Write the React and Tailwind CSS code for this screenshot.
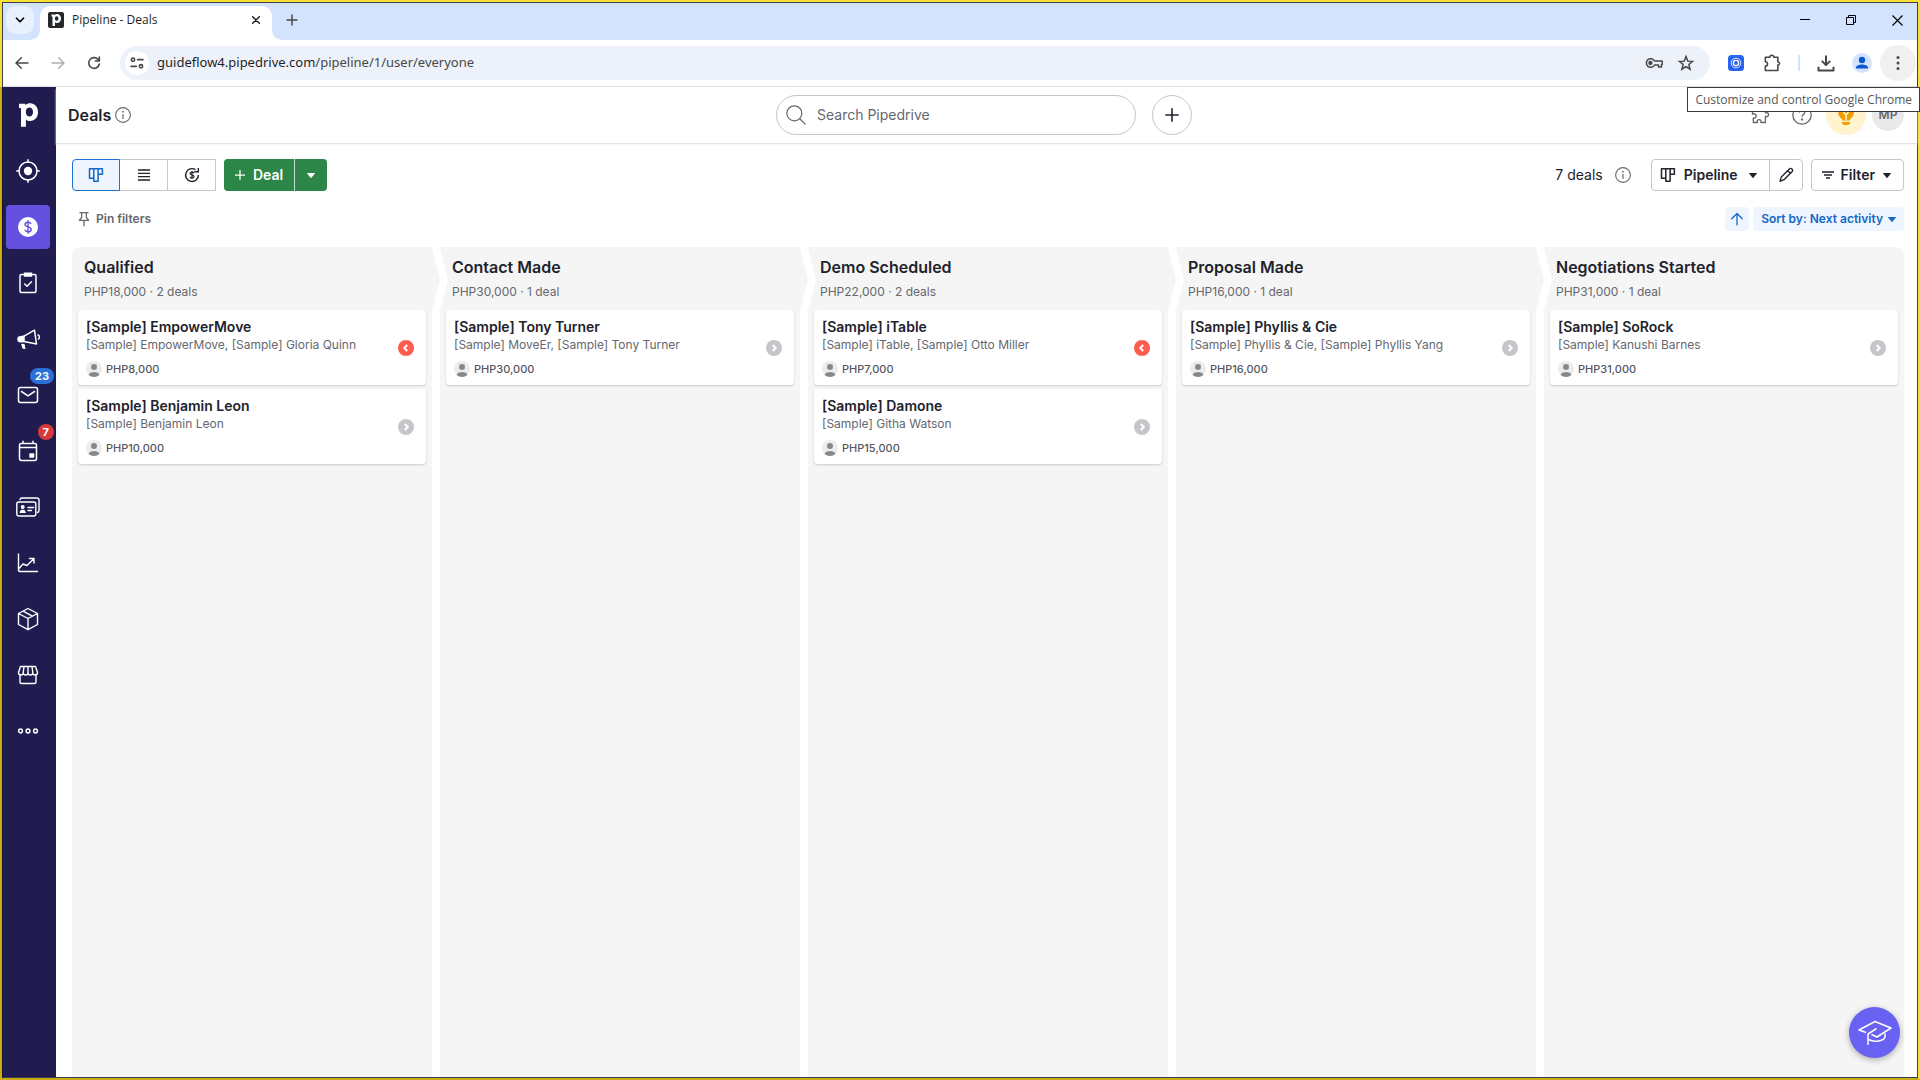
import clsx from 'clsx';

const STAGES = [
  {
    name: 'Qualified',
    total: 'PHP18,000',
    count: '2 deals',
    deals: [
      {
        title: '[Sample] EmpowerMove',
        contact: '[Sample] EmpowerMove, [Sample] Gloria Quinn',
        value: 'PHP8,000',
        overdue: true,
      },
      { title: '[Sample] Benjamin Leon', contact: '[Sample] Benjamin Leon', value: 'PHP10,000' },
    ],
  },
  {
    name: 'Contact Made',
    total: 'PHP30,000',
    count: '1 deal',
    deals: [
      { title: '[Sample] Tony Turner', contact: '[Sample] MoveEr, [Sample] Tony Turner', value: 'PHP30,000' },
    ],
  },
  {
    name: 'Demo Scheduled',
    total: 'PHP22,000',
    count: '2 deals',
    deals: [
      {
        title: '[Sample] iTable',
        contact: '[Sample] iTable, [Sample] Otto Miller',
        value: 'PHP7,000',
        overdue: true,
      },
      { title: '[Sample] Damone', contact: '[Sample] Githa Watson', value: 'PHP15,000' },
    ],
  },
  {
    name: 'Proposal Made',
    total: 'PHP16,000',
    count: '1 deal',
    deals: [
      { title: '[Sample] Phyllis & Cie', contact: '[Sample] Phyllis & Cie, [Sample] Phyllis Yang', value: 'PHP16,000' },
    ],
  },
  {
    name: 'Negotiations Started',
    total: 'PHP31,000',
    count: '1 deal',
    deals: [{ title: '[Sample] SoRock', contact: '[Sample] Kanushi Barnes', value: 'PHP31,000' }],
  },
];

// Stroke icon base
const Icon = ({ size = 24, width = 1.5, className, children }) => (
  <svg
    width={size}
    height={size}
    viewBox="0 0 24 24"
    fill="none"
    stroke="currentColor"
    strokeWidth={width}
    strokeLinecap="round"
    strokeLinejoin="round"
    className={clsx('shrink-0', className)}
    aria-hidden="true"
  >
    {children}
  </svg>
);

const PipedriveMark = ({ size }) => (
  <svg width={size} height={size} viewBox="0 0 24 24" className="shrink-0" aria-hidden="true">
    <path
      fill="currentColor"
      fillRule="evenodd"
      d="M3 .8h5.6c.5 0 .8.5.9 1.2C10.600.8 12.200.2 14.100.2c4.700 0 7.900 3.700 7.900 8.900 0 5.300-3.300 9-7.900 9-1.800 0-3.200-.6-4.200-1.600V23.800H5V5.800c0-.5-.2-.7-.700-.7H3V.8Zm10.400 3.800c-1.900 0-3.600 1.400-3.600 4.500 0 2.700 1.500 4.500 3.600 4.500 1.900 0 3.600-1.400 3.600-4.500 0-2.900-1.600-4.500-3.600-4.500Z"
    />
  </svg>
);

const Caret = ({ className }) => (
  <svg width="8" height="5" viewBox="0 0 8 5" fill="currentColor" className={clsx('shrink-0', className)} aria-hidden="true">
    <path d="M.3 0h7.4c.3 0 .4.300.2.500L4.400 4.700a.5.5 0 0 1-.8 0L.1.500C-.1.300 0 0 .3 0Z" />
  </svg>
);

const InfoIcon = ({ className }) => (
  <svg width="16" height="16" viewBox="0 0 16 16" fill="none" className={clsx('shrink-0', className)} aria-hidden="true">
    <circle cx="8" cy="8" r="7.400" stroke="currentColor" strokeWidth="1.100" />
    <path d="M8 7v5" stroke="currentColor" strokeWidth="1.200" />
    <circle cx="8" cy="4.700" r=".9" fill="currentColor" />
  </svg>
);

const BoardIcon = () => (
  <svg width="16" height="16" viewBox="0 0 16 16" fill="none" stroke="currentColor" strokeWidth="1.500" strokeLinejoin="round" aria-hidden="true">
    <path d="M1.500 1.700h4.300v9.600H1.500zM5.800 1.700h4.300v12.600H5.800zM10.100 1.700h4.300v5.600h-4.300z" />
  </svg>
);

const NAV_ITEMS = [
  {
    label: 'Leads',
    icon: (
      <Icon>
        <circle cx="12" cy="12" r="9" />
        <circle cx="12" cy="12" r="4.200" fill="currentColor" stroke="none" />
        <path d="M12 .8V3M12 21v2.200M.8 12H3M21 12h2.200" />
      </Icon>
    ),
  },
  {
    label: 'Deals',
    active: true,
    icon: (
      <svg width="20" height="20" viewBox="0 0 20 20" aria-hidden="true">
        <circle cx="10" cy="10" r="10" fill="white" />
        <path
          d="M13 6.900C12.500 5.700 11.400 5.200 10 5.200c-1.700 0-3 .8-3 2.200 0 3.300 6.200 1.600 6.200 5 0 1.500-1.300 2.400-3.200 2.400-1.600 0-2.800-.7-3.300-2M10 3.300v13.400"
          fill="none"
          stroke="#6450df"
          strokeWidth="1.400"
        />
      </svg>
    ),
  },
  {
    label: 'Projects',
    icon: (
      <Icon>
        <rect x="4" y="3.500" width="16" height="18" rx="1.500" />
        <path d="M8.500 2.200h7V5h-7z" fill="currentColor" />
        <path d="m8.700 13 2.300 2.300 4.500-4.500" />
      </Icon>
    ),
  },
  {
    label: 'Campaigns',
    icon: (
      <Icon>
        <path d="M4.500 9.800 8 9.200v5.300l-3.500.3a2.500 2.500 0 0 1 0-5Z" fill="currentColor" />
        <path d="m8 9.200 10.500-6L20.500 17 8 14.500" />
        <path d="M22 8a2.300 2.300 0 0 1 .5 4" />
        <path d="M6 17.500 7.200 21l1.500.3-.7-3.500Z" fill="currentColor" />
      </Icon>
    ),
  },
  {
    label: 'Mail',
    badge: '23',
    badgeColor: 'bg-[#2970d8]',
    icon: (
      <Icon>
        <rect x="2.500" y="4.500" width="19" height="15" rx="2" />
        <path d="m5.500 8.500 6.500 4.300 6.500-4.300" />
      </Icon>
    ),
  },
  {
    label: 'Activities',
    badge: '7',
    badgeColor: 'bg-[#d83a3a]',
    icon: (
      <Icon>
        <path d="M3.500 8.500V6A1.500 1.500 0 0 1 5 4.500h14A1.500 1.500 0 0 1 20.500 6v13.500a2 2 0 0 1-2 2h-13a2 2 0 0 1-2-2Zm0 0h17M7 2.300v2M17 2.300v2" />
        <path d="M14 15h3.500v3H14z" fill="currentColor" />
      </Icon>
    ),
  },
  {
    label: 'Contacts',
    icon: (
      <Icon width={1.4}>
        <rect x=".8" y="7" width="19" height="14" rx="2" />
        <path d="M4 4.500A2 2 0 0 1 6 3h15a2 2 0 0 1 2 2v10.500a2 2 0 0 1-1.500 2" />
        <circle cx="6.700" cy="12" r="1.300" fill="currentColor" />
        <path d="M4.300 17.300c.3-1.500 1.200-2 2.400-2s2.100.5 2.400 2ZM12 12.500h5.500M12 15.500h3.500" fill="currentColor" />
      </Icon>
    ),
  },
  {
    label: 'Insights',
    icon: (
      <Icon width={1.4}>
        <path d="M2.500 3v16a1.500 1.500 0 0 0 1.500 1.500h17.500" />
        <path d="m3 17.500 4-4.500 4 1.500 6.500-6.500M13.500 7.500H18V12" />
      </Icon>
    ),
  },
  {
    label: 'Products',
    icon: (
      <Icon width={1.4}>
        <path d="m12 1.500 9.500 5v11L12 22.700l-9.500-5.200v-11ZM2.500 6.500l9.500 5 9.500-5M12 11.500v11M7 4.200l9.500 5" />
      </Icon>
    ),
  },
  {
    label: 'Marketplace',
    icon: (
      <Icon width={1.4}>
        <path d="M4.500 3.500h15l2 6c0 1.500-1 2.500-2.400 2.500s-2.300-1-2.300-2.300c0 1.300-1 2.300-2.400 2.300S12 11 12 9.700c0 1.300-1 2.300-2.400 2.300s-2.400-1-2.400-2.300c0 1.300-.9 2.300-2.300 2.300S2.500 11 2.500 9.500ZM8 3.500l-.8 6.200M12 3.500v6.200M16 3.500l.8 6.200M4 12v7a1.500 1.500 0 0 0 1.500 1.500h13A1.500 1.500 0 0 0 20 19v-7" />
      </Icon>
    ),
  },
  {
    label: 'More',
    icon: (
      <Icon>
        <circle cx="4.500" cy="12" r="1.900" />
        <circle cx="12" cy="12" r="1.900" />
        <circle cx="19.500" cy="12" r="1.900" />
      </Icon>
    ),
  },
];

const ToolbarButton = ({ label, className, children }) => (
  <button aria-label={label} className={clsx('flex size-9 shrink-0 items-center justify-center rounded-full', className)}>
    {children}
  </button>
);

const TabStrip = () => (
  <div className="flex h-[37px] items-start bg-[#d3e3fd] pt-[3px] pl-[3px]">
    <button aria-label="Search tabs" className="flex size-7 items-center justify-center rounded-[10px] bg-[#e9f0fd]">
      <Icon size={14} width={3}><path d="m6 9 6 6 6-6" /></Icon>
    </button>
    <div className="relative ml-1.5 flex h-[34px] w-[232px] items-center rounded-t-[10px] bg-white pb-1.5 pl-2 text-[#1f1f1f]">
      <span className="flex size-4 items-center justify-center rounded-[2px] bg-[#26292c] text-white">
        <PipedriveMark size={12} />
      </span>
      <span className="ml-2 flex-1 text-xs">Pipeline - Deals</span>
      <button aria-label="Close tab" className="mr-2 flex size-4 items-center justify-center">
        <Icon size={16} width={2.2}><path d="m7 7 10 10M17 7 7 17" /></Icon>
      </button>
      {/* flared bottom corners of the active tab */}
      <svg className="absolute -left-2.5 bottom-0" width="10" height="10" fill="white" aria-hidden="true">
        <path d="M10 0v10H0A10 10 0 0 0 10 0Z" />
      </svg>
      <svg className="absolute -right-2.5 bottom-0" width="10" height="10" fill="white" aria-hidden="true">
        <path d="M0 0v10h10A10 10 0 0 1 0 0Z" />
      </svg>
    </div>
    <button aria-label="New tab" className="ml-1.5 flex size-7 items-center justify-center text-[#474747]">
      <Icon size={16} width={2.2}><path d="M12 4.500v15M4.500 12h15" /></Icon>
    </button>
    <div className="-mr-[3px] ml-auto flex text-black">
      <button aria-label="Minimize" className="flex h-7 w-[46px] items-center justify-center">
        <svg width="10" height="10" fill="currentColor"><path d="M0 4h10v1H0z" /></svg>
      </button>
      <button aria-label="Restore" className="flex h-7 w-[46px] items-center justify-center">
        <svg width="10" height="10" fill="none" stroke="currentColor"><path d="M.5 2.500h7v7h-7zM2.500 2.500v-2h7v7h-2" /></svg>
      </button>
      <button aria-label="Close" className="flex h-7 w-[46px] items-center justify-center">
        <svg width="11" height="11" fill="none" stroke="currentColor" strokeWidth="1.200"><path d="m.5.500 10 10M10.500.500l-10 10" /></svg>
      </button>
    </div>
  </div>
);

const AddressBar = () => (
  <div className="flex h-[47px] items-center border-b border-[#dedfe1] bg-white px-px text-[#474747]">
    <ToolbarButton label="Back">
      <Icon size={16} width={2.2}><path d="M21 12H4M11 4l-8 8 8 8" /></Icon>
    </ToolbarButton>
    <ToolbarButton label="Forward" className="text-[#b0b0b0]">
      <Icon size={16} width={2.2}><path d="M3 12h17M13 4l8 8-8 8" /></Icon>
    </ToolbarButton>
    <ToolbarButton label="Reload">
      <Icon size={16} width={2.4}><path d="M20 13.500A8 8 0 1 1 18 6.500l2 2M20 3v6h-6" /></Icon>
    </ToolbarButton>
    <div className="mx-2 flex h-[34px] min-w-0 flex-1 items-center rounded-full bg-[#edf2fa] pr-4 pl-[5px]">
      <button aria-label="View site information" className="flex size-6 items-center justify-center rounded-full bg-white">
        <Icon size={16} width={2.4}>
          <circle cx="6" cy="7" r="2.500" />
          <path d="M13 7h8M3 17h8" />
          <circle cx="18" cy="17" r="2.500" />
        </Icon>
      </button>
      <span className="ml-2 min-w-0 flex-1 font-['Noto_Sans','Liberation_Sans',sans-serif] text-[13px] whitespace-nowrap">
        <span className="text-[#1f1f1f]">guideflow4.pipedrive.com</span>/pipeline/1/user/everyone
      </span>
      <button aria-label="Manage passwords" className="flex size-4 items-center justify-center">
        <svg width="18" height="12" viewBox="0 0 18 12" fill="none" stroke="currentColor" strokeWidth="1.500" className="shrink-0" aria-hidden="true">
          <path d="M9.500 4A4.300 4.300 0 1 0 9.500 8h4v2h3V7.500h.7V4Z" strokeLinejoin="round" />
          <circle cx="5.400" cy="6" r="1.400" fill="currentColor" />
        </svg>
      </button>
      <button aria-label="Bookmark this tab" className="ml-4 flex size-4 items-center justify-center">
        <Icon size={18} width={2}>
          <path d="m12 3.500 2.400 6 6.400.4-5 4.100 1.700 6.300-5.500-3.500-5.500 3.500 1.700-6.300-5-4.100 6.400-.4Z" strokeLinejoin="miter" />
        </Icon>
      </button>
    </div>
    <ToolbarButton label="Extension">
      <svg width="16" height="16" viewBox="0 0 16 16" fill="none" aria-hidden="true">
        <rect width="16" height="16" rx="3.500" fill="#2a62f0" />
        <circle cx="8" cy="8" r="4.800" stroke="white" strokeWidth=".8" />
        <circle cx="8" cy="8" r="2.600" stroke="white" strokeWidth="1.300" />
      </svg>
    </ToolbarButton>
    <ToolbarButton label="Extensions">
      <Icon size={20} width={1.9}>
        <path d="M4 5h5.500a2.300 2.300 0 0 1 4.600 0H19v5.500a2 2 0 0 1 0 4V21H4v-5.300a2.600 2.600 0 0 0 0-5.200Z" />
      </Icon>
    </ToolbarButton>
    <span className="mx-2 h-4 w-0.5 bg-[#d3e3fd]" />
    <ToolbarButton label="Downloads">
      <Icon size={20} width={2.4}><path d="M12 3v11M7 9.500l5 5 5-5M3 16.500V21h18v-4.500" strokeLinecap="butt" /></Icon>
    </ToolbarButton>
    <ToolbarButton label="Profile">
      <svg width="20" height="20" viewBox="0 0 20 20" aria-hidden="true">
        <circle cx="10" cy="10" r="10" fill="#d3e3fd" />
        <circle cx="10" cy="7" r="3.200" fill="#0b57d0" />
        <path d="M4 15.500v-1c0-2 3.500-3 6-3s6 1 6 3v1Z" fill="#0b57d0" />
      </svg>
    </ToolbarButton>
    <ToolbarButton label="Customize and control" className="bg-[#f0f0f0]">
      <svg width="4" height="16" viewBox="0 0 4 16" fill="currentColor" aria-hidden="true">
        <circle cx="2" cy="2.500" r="1.500" />
        <circle cx="2" cy="8" r="1.500" />
        <circle cx="2" cy="13.500" r="1.500" />
      </svg>
    </ToolbarButton>
  </div>
);

const Sidebar = () => (
  <nav className="flex w-[53px] shrink-0 flex-col gap-3 bg-[#211c4f] pt-1.5 pl-[3px] text-white">
    <a href="#home" aria-label="Pipedrive" className="flex size-11 items-center justify-center">
      <PipedriveMark size={24} />
    </a>
    {NAV_ITEMS.map((item) => (
      <a
        key={item.label}
        href={`#${item.label.toLowerCase()}`}
        aria-label={item.label}
        className={clsx('relative flex size-11 items-center justify-center rounded-sm', item.active && 'bg-[#6450df]')}
      >
        {item.icon}
        {item.badge && (
          <span
            className={clsx(
              'absolute -top-[5px] -right-1 flex h-4 items-center rounded-full px-[5px] text-[11px] font-bold',
              item.badgeColor
            )}
          >
            {item.badge}
          </span>
        )}
      </a>
    ))}
  </nav>
);

const AppHeader = () => (
  <header className="grid h-14 shrink-0 grid-cols-[1fr_auto_1fr] items-center pr-[13px] pl-2 text-[#65686f] shadow-[0_1px_0_#e3e4e6,0_2px_2px_#f3f3f3]">
    <div className="flex items-center gap-1 pl-1">
      <h1 className="text-base font-semibold text-[#21232c]">Deals</h1>
      <InfoIcon />
    </div>
    <div className="flex items-center gap-4">
      <label className="flex h-10 w-[360px] items-center gap-[11px] rounded-full border border-[#c5c6c9] pl-[9px]">
        <Icon size={20} width={1.5}>
          <circle cx="10" cy="10" r="9" />
          <path d="m16.500 16.500 6.500 6.500" />
        </Icon>
        <input
          type="text"
          aria-label="Search Pipedrive"
          placeholder="Search Pipedrive"
          className="min-w-0 flex-1 text-sm outline-none placeholder:text-[#65686f]"
        />
      </label>
      <button aria-label="Quick add" className="flex size-10 items-center justify-center rounded-full border border-[#c5c6c9] text-[#21232c]">
        <Icon size={16} width={2.4}><path d="M12 2v20M2 12h20" strokeLinecap="butt" /></Icon>
      </button>
    </div>
    <div className="flex items-center justify-end gap-1.5">
      <button aria-label="Integrations" className="flex size-9 items-center justify-center">
        <Icon size={20} width={1.6}>
          <path d="M3 4h5.500a2.300 2.300 0 0 1 4.600 0H18.500v5.500c2-1 3.800 0 3.800 2s-1.800 3-3.800 2V21h-5.500c1-2-.3-3.500-2-3.500s-3 1.500-2 3.500H4v-5.500c2 .8 3.500-.3 3.500-2.200S5 9.500 3 11Z" />
        </Icon>
      </button>
      <button aria-label="Help" className="flex size-9 items-center justify-center">
        <svg width="20" height="20" viewBox="0 0 20 20" fill="none" stroke="currentColor" strokeWidth="1.300" aria-hidden="true">
          <circle cx="10" cy="10" r="9.200" />
          <path d="M7.300 7.500C7.400 5.900 8.500 5 10 5c1.600 0 2.700 1 2.700 2.400 0 2-2.700 2.300-2.700 4.400" />
          <circle cx="10" cy="14.500" r=".5" fill="currentColor" />
        </svg>
      </button>
      <button aria-label="Tips" className="flex size-10 items-center justify-center rounded-full bg-[#fff4ce]">
        <svg width="16" height="20" viewBox="0 0 16 20" aria-hidden="true">
          <path d="M8 0a7.500 7.500 0 0 0-4 13.900V15.500h8V13.900A7.500 7.500 0 0 0 8 0ZM4 17h8v1.200L10.500 20h-5L4 18.200Z" fill="#f29d00" />
          <path d="m5.500 7 2.500 3 2.500-3M8 10v5" stroke="#fff4ce" strokeWidth="1.500" fill="none" />
        </svg>
      </button>
      <button className="flex size-8 items-center justify-center rounded-full bg-[#e9e9ea] text-xs font-semibold">MP</button>
    </div>
  </header>
);

const BoardToolbar = () => (
  <div className="flex items-center text-sm text-[#21232c]">
    <div className="flex h-8">
      <button aria-label="Pipeline view" className="flex w-12 items-center justify-center rounded-l-sm border border-[#1f70d2] bg-[#eff5fe] text-[#1267c7]">
        <BoardIcon />
      </button>
      <button aria-label="List view" className="flex w-12 items-center justify-center border-y border-r border-[#c5c6c9]">
        <svg width="12" height="12" fill="none" stroke="currentColor" strokeWidth="1.300" aria-hidden="true">
          <path d="M0 1h12M0 4.300h12M0 7.700h12M0 11h12" />
        </svg>
      </button>
      <button aria-label="Forecast view" className="flex w-12 items-center justify-center border-y border-r border-[#c5c6c9]">
        <svg width="16" height="16" viewBox="0 0 16 16" fill="none" stroke="currentColor" strokeWidth="1.400" aria-hidden="true">
          <path d="M11.500 2.700A6.400 6.400 0 1 0 14.400 8M10.300 4.700h4V1" />
          <path d="M10 6.200C9.700 5.400 9 5.100 8 5.100c-1.100 0-2 .5-2 1.400 0 2 4 1 4 3 0 1-.9 1.500-2 1.500S6.200 10.600 6 9.800M8 4v8" strokeWidth="1.200" />
        </svg>
      </button>
    </div>
    <div className="ml-2 flex h-8 gap-px overflow-hidden rounded-sm bg-[#c3dfcb] text-white">
      <button className="flex items-center gap-2 bg-[#2b8647] px-[11px] font-semibold">
        <Icon size={10} width={3}><path d="M12 0v24M0 12h24" strokeLinecap="butt" /></Icon>
        Deal
      </button>
      <button aria-label="More deal options" className="flex w-8 items-center justify-center bg-[#2b8647]">
        <Caret />
      </button>
    </div>
    <span className="ml-auto">7 deals</span>
    <InfoIcon className="ml-3 text-[#65686f]" />
    <div className="ml-5 flex h-8 rounded-sm border border-[#c5c6c9]">
      <button className="flex items-center border-r border-[#c5c6c9] px-2 font-semibold">
        <BoardIcon />
        <span className="ml-2">Pipeline</span>
        <Caret className="mr-1 ml-[11px]" />
      </button>
      <button aria-label="Edit pipeline" className="flex w-8 items-center justify-center">
        <Icon size={16} width={2}><path d="M3 21.500 5 15 17 3a2.800 2.800 0 0 1 4 4L9 19l-6 2.500ZM14.500 5.500l4 4" /></Icon>
      </button>
    </div>
    <button className="ml-2 flex h-8 items-center rounded-sm border border-[#c5c6c9] pr-3 pl-2.5 font-semibold">
      <svg width="12" height="8" fill="none" stroke="currentColor" strokeWidth="1.500" aria-hidden="true">
        <path d="M0 1h12M2 4h8M4 7h4" />
      </svg>
      <span className="ml-[7px]">Filter</span>
      <Caret className="ml-2" />
    </button>
  </div>
);

const FilterRow = () => (
  <div className="mt-4 flex h-6 items-center gap-1 text-xs font-semibold">
    <button className="mr-auto flex items-center gap-1 pl-1 text-[#65686f]">
      <Icon size={16} width={2}>
        <path d="M6 2.500h12M8.500 2.500v7L5 14h14l-3.500-4.500v-7M12 14v8" />
      </Icon>
      Pin filters
    </button>
    <button aria-label="Sort ascending" className="flex size-6 items-center justify-center rounded-sm bg-[#eff5fe] text-[#1267c7]">
      <Icon size={14} width={2.2}><path d="M12 22V3M3 11.500 12 2.500l9 9" /></Icon>
    </button>
    <button className="flex h-6 items-center gap-[5px] rounded-sm bg-[#eff5fe] px-2 text-[#1267c7]">
      Sort by: Next activity
      <Caret />
    </button>
  </div>
);

const DealCard = ({ deal }) => (
  <article className="flex h-[75px] items-center rounded-sm bg-white pr-3 pl-2 shadow-[0_1px_2px_rgba(33,35,44,0.2)]">
    <div className="min-w-0 flex-1 self-start pt-[7px]">
      <h3 className="text-sm leading-5 font-semibold text-[#21232c]">{deal.title}</h3>
      <p className="truncate text-xs leading-4 text-[#65686f]">{deal.contact}</p>
      <div className="mt-2 flex items-center gap-1 text-[11px] leading-4 font-medium text-[#55585f]">
        <svg width="16" height="16" viewBox="0 0 16 16" aria-hidden="true">
          <circle cx="8" cy="8" r="8" fill="#ececed" />
          <circle cx="8" cy="6" r="3" fill="#86888d" />
          <path d="M2.600 13.900C3.300 11.800 5.500 11 8 11s4.700.8 5.400 2.900A8 8 0 0 1 8 16a8 8 0 0 1-5.400-2.100Z" fill="#86888d" />
        </svg>
        {deal.value}
      </div>
    </div>
    <button
      aria-label={deal.overdue ? 'Overdue activity' : 'Next activity'}
      className={clsx('flex size-4 items-center justify-center rounded-full text-white', deal.overdue ? 'bg-[#ff5c4d]' : 'bg-[#c5c6c9]')}
    >
      <Icon size={12} width={4}>
        <path d={deal.overdue ? 'm14.500 6-6 6 6 6' : 'm9.500 6 6 6-6 6'} strokeLinecap="butt" strokeLinejoin="miter" />
      </Icon>
    </button>
  </article>
);

const StageColumn = ({ stage, isLast }) => (
  <section className="min-w-0 flex-1 bg-[#f5f5f5] px-1.5 first:rounded-tl-lg last:rounded-tr-lg">
    <div className="relative -mx-1.5 h-[63px] px-3 pt-2">
      <h2 className="text-base leading-6 font-semibold text-[#21232c]">{stage.name}</h2>
      <p className="mt-[5px] text-xs leading-4 text-[#65686f]">
        {stage.total} · {stage.count}
      </p>
      {/* arrow pointing to the next stage */}
      {!isLast && (
        <svg className="absolute top-0 -right-4 z-10" width="16" height="63" aria-hidden="true">
          <path d="M0 0 8 33 0 63Z" fill="#f5f5f5" />
          <path d="M0 0h8l8 33-8 30H0l8-30Z" fill="white" />
        </svg>
      )}
    </div>
    <div className="flex flex-col gap-1">
      {stage.deals.map((deal) => (
        <DealCard key={deal.title} deal={deal} />
      ))}
    </div>
  </section>
);

const App = () => (
  <div className="relative flex h-screen flex-col overflow-hidden font-['Inter','Liberation_Sans',sans-serif]">
    <div className="shrink-0 border-x-2 border-t-2 border-[#f9e034] font-['Open_Sans','Liberation_Sans',sans-serif]">
      <div className="overflow-hidden border-x border-t border-[#3c3f4d]">
        <TabStrip />
        <AddressBar />
      </div>
    </div>

    <div className="flex min-h-0 flex-1 border-x-2 border-b-2 border-r-[#f9e034] border-b-[#c9ab12] border-l-[#c9ab12]">
      <div className="flex min-w-0 flex-1 border-x border-b border-[#3c3f4d] border-l-[#15122f] bg-white">
        <Sidebar />
        <div className="flex min-w-0 flex-1 flex-col">
          <AppHeader />
          <main className="flex min-h-0 flex-1 flex-col pt-4 pr-[13px] pl-4">
            <BoardToolbar />
            <FilterRow />
            <div className="mt-4 flex min-h-0 flex-1 gap-2">
              {STAGES.map((stage, i) => (
                <StageColumn key={stage.name} stage={stage} isLast={i === STAGES.length - 1} />
              ))}
            </div>
          </main>
        </div>
      </div>
    </div>

    <div
      role="tooltip"
      className="absolute top-[87px] right-0 z-20 flex h-[25px] items-center border border-[#3c3c3c] bg-white px-[7px] font-['Open_Sans','Liberation_Sans',sans-serif] text-xs text-[#575757]"
    >
      Customize and control Google Chrome
    </div>

    <button
      aria-label="Learning center"
      className="absolute right-5 bottom-[22px] z-20 flex size-[51px] items-center justify-center rounded-full bg-[#6861f2] text-white shadow-[0_2px_6px_rgba(0,0,0,0.3)]"
    >
      <svg width="34" height="26" viewBox="0 0 34 26" fill="none" stroke="currentColor" strokeWidth="1.500" strokeLinejoin="round" aria-hidden="true">
        <path d="M8 12.500 1 10 17 1.500 33 8l-14 9-5.500-2.500" />
        <path d="M18.500 8.500 10 14v11" />
        <path d="M10.500 19.500c6 3.200 16.500 1.500 16.500-3v-3" />
      </svg>
    </button>
  </div>
);

export default App;
